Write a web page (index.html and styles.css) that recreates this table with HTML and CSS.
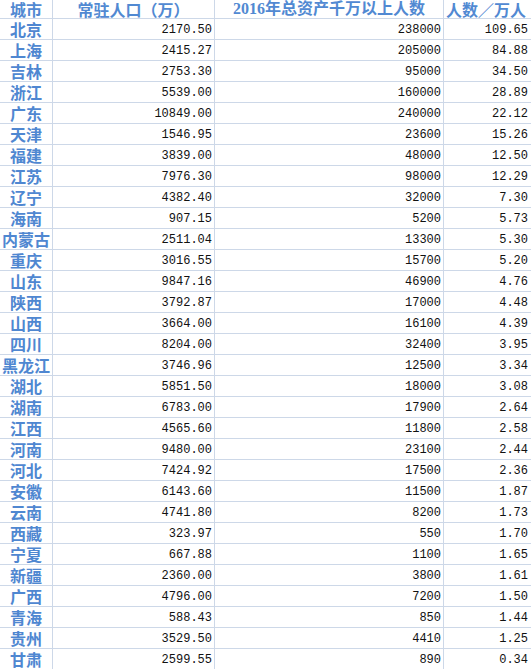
FILE: index.html
```html
<!DOCTYPE html>
<html lang="zh">
<head>
<meta charset="utf-8">
<title>人数</title>
<link rel="stylesheet" href="styles.css">
</head>
<body>
<div class="sheet">
  <div class="cell head c1">城市</div>
  <div class="cell head c2">常驻人口（万）</div>
  <div class="cell head c3">2016年总资产千万以上人数</div>
  <div class="cell head c4">人数／万人</div>

  <div class="cell city">北京</div><div class="cell num">2170.50</div><div class="cell num">238000</div><div class="cell num last">109.65</div>
  <div class="cell city">上海</div><div class="cell num">2415.27</div><div class="cell num">205000</div><div class="cell num last">84.88</div>
  <div class="cell city">吉林</div><div class="cell num">2753.30</div><div class="cell num">95000</div><div class="cell num last">34.50</div>
  <div class="cell city">浙江</div><div class="cell num">5539.00</div><div class="cell num">160000</div><div class="cell num last">28.89</div>
  <div class="cell city">广东</div><div class="cell num">10849.00</div><div class="cell num">240000</div><div class="cell num last">22.12</div>
  <div class="cell city">天津</div><div class="cell num">1546.95</div><div class="cell num">23600</div><div class="cell num last">15.26</div>
  <div class="cell city">福建</div><div class="cell num">3839.00</div><div class="cell num">48000</div><div class="cell num last">12.50</div>
  <div class="cell city">江苏</div><div class="cell num">7976.30</div><div class="cell num">98000</div><div class="cell num last">12.29</div>
  <div class="cell city">辽宁</div><div class="cell num">4382.40</div><div class="cell num">32000</div><div class="cell num last">7.30</div>
  <div class="cell city">海南</div><div class="cell num">907.15</div><div class="cell num">5200</div><div class="cell num last">5.73</div>
  <div class="cell city">内蒙古</div><div class="cell num">2511.04</div><div class="cell num">13300</div><div class="cell num last">5.30</div>
  <div class="cell city">重庆</div><div class="cell num">3016.55</div><div class="cell num">15700</div><div class="cell num last">5.20</div>
  <div class="cell city">山东</div><div class="cell num">9847.16</div><div class="cell num">46900</div><div class="cell num last">4.76</div>
  <div class="cell city">陕西</div><div class="cell num">3792.87</div><div class="cell num">17000</div><div class="cell num last">4.48</div>
  <div class="cell city">山西</div><div class="cell num">3664.00</div><div class="cell num">16100</div><div class="cell num last">4.39</div>
  <div class="cell city">四川</div><div class="cell num">8204.00</div><div class="cell num">32400</div><div class="cell num last">3.95</div>
  <div class="cell city">黑龙江</div><div class="cell num">3746.96</div><div class="cell num">12500</div><div class="cell num last">3.34</div>
  <div class="cell city">湖北</div><div class="cell num">5851.50</div><div class="cell num">18000</div><div class="cell num last">3.08</div>
  <div class="cell city">湖南</div><div class="cell num">6783.00</div><div class="cell num">17900</div><div class="cell num last">2.64</div>
  <div class="cell city">江西</div><div class="cell num">4565.60</div><div class="cell num">11800</div><div class="cell num last">2.58</div>
  <div class="cell city">河南</div><div class="cell num">9480.00</div><div class="cell num">23100</div><div class="cell num last">2.44</div>
  <div class="cell city">河北</div><div class="cell num">7424.92</div><div class="cell num">17500</div><div class="cell num last">2.36</div>
  <div class="cell city">安徽</div><div class="cell num">6143.60</div><div class="cell num">11500</div><div class="cell num last">1.87</div>
  <div class="cell city">云南</div><div class="cell num">4741.80</div><div class="cell num">8200</div><div class="cell num last">1.73</div>
  <div class="cell city">西藏</div><div class="cell num">323.97</div><div class="cell num">550</div><div class="cell num last">1.70</div>
  <div class="cell city">宁夏</div><div class="cell num">667.88</div><div class="cell num">1100</div><div class="cell num last">1.65</div>
  <div class="cell city">新疆</div><div class="cell num">2360.00</div><div class="cell num">3800</div><div class="cell num last">1.61</div>
  <div class="cell city">广西</div><div class="cell num">4796.00</div><div class="cell num">7200</div><div class="cell num last">1.50</div>
  <div class="cell city">青海</div><div class="cell num">588.43</div><div class="cell num">850</div><div class="cell num last">1.44</div>
  <div class="cell city">贵州</div><div class="cell num">3529.50</div><div class="cell num">4410</div><div class="cell num last">1.25</div>
  <div class="cell city">甘肃</div><div class="cell num">2599.55</div><div class="cell num">890</div><div class="cell num last">0.34</div>
</div>
</body>
</html>
```

FILE: styles.css
```css
html, body {
  margin: 0;
  padding: 0;
  background: #ffffff;
}

.sheet {
  display: grid;
  grid-template-columns: 53px 162px 229px 87px;
  grid-template-rows: 19px;
  grid-auto-rows: 21px;
  width: 531px;
}

.cell {
  box-sizing: border-box;
  border-right: 1px solid #cdd8e8;
  border-bottom: 1px solid #cdd8e8;
  display: flex;
  align-items: flex-end;
  white-space: nowrap;
}

.head {
  font-family: "Noto Sans CJK SC", "DejaVu Sans", sans-serif;
  font-size: 16px;
  font-weight: 700;
  line-height: 18px;
  color: #5189d2;
  justify-content: center;
}

.head.c3 {
  font-family: "Liberation Serif", "Noto Sans CJK SC", serif;
}

.head.c4 {
  justify-content: flex-start;
  padding-left: 2px;
  border-right: none;
}

.city {
  font-family: "Noto Sans CJK SC", sans-serif;
  font-size: 16px;
  font-weight: 700;
  line-height: 19px;
  color: #4f87d1;
  justify-content: center;
}

.num {
  font-family: "Liberation Mono", "DejaVu Sans Mono", monospace;
  font-size: 12px;
  line-height: 14px;
  color: #111111;
  justify-content: flex-end;
  padding-right: 2px;
  padding-bottom: 2px;
}

.num.last {
  border-right: none;
  padding-right: 3px;
}
```
